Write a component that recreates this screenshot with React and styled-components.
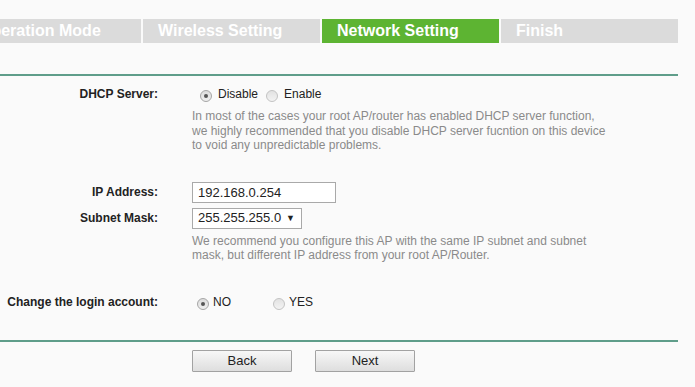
import styled, { createGlobalStyle } from 'styled-components';

const GlobalStyle = createGlobalStyle`
  html, body {
    margin: 0;
    padding: 0;
    background: #fafafa;
    overflow: hidden;
  }
  body {
    font-family: "Liberation Sans", Arial, sans-serif;
  }
`;

const Wrapper = styled.div`
  width: 714px;
  margin-left: -36px;
  padding-top: 19px;
  font-family: "Liberation Sans", Arial, sans-serif;
`;

const Tabs = styled.div`
  display: flex;
  gap: 2px;
`;

const Tab = styled.div`
  width: 177px;
  height: 24px;
  box-sizing: border-box;
  padding-left: 15px;
  background: ${(p) => (p.$active ? '#5db432' : '#dbdbdb')};
  color: #ffffff;
  font-weight: bold;
  font-size: 16px;
  line-height: 24px;
  white-space: nowrap;
  overflow: hidden;
`;

const Divider = styled.div`
  height: 2px;
  background: #5f9d8a;
  margin-top: ${(p) => p.$top}px;
`;

const Row = styled.div`
  display: grid;
  grid-template-columns: 194px 1fr;
  column-gap: 34px;
  align-items: center;
  margin-top: ${(p) => p.$top}px;
`;

const Label = styled.div`
  text-align: right;
  font-weight: bold;
  font-size: 12px;
  line-height: 20px;
  color: #222;
  white-space: nowrap;
`;

const Value = styled.div`
  display: flex;
  align-items: center;
  gap: ${(p) => p.$gap || 0}px;
  font-size: 12px;
  line-height: 20px;
  color: #222;
`;

const Hint = styled.p`
  margin: 0;
  font-size: 12px;
  line-height: 14.5px;
  color: #8a8a8a;
  white-space: nowrap;
`;

const Option = styled.label`
  display: flex;
  align-items: center;
  gap: ${(p) => p.$gap}px;
  width: ${(p) => (p.$width ? `${p.$width}px` : 'auto')};
`;

const Radio = styled.span`
  position: relative;
  width: 10px;
  height: 10px;
  margin-left: ${(p) => p.$ml || 0}px;
  margin-top: 4px;
  border-radius: 50%;
  border: 1px solid ${(p) => (p.$checked ? '#a6a6a6' : '#c3c3c3')};
  background: ${(p) =>
    p.$checked
      ? 'linear-gradient(#dcdcdc, #efefef)'
      : 'linear-gradient(#e2e2e2, #f3f3f3)'};

  &::after {
    content: '';
    display: ${(p) => (p.$checked ? 'block' : 'none')};
    position: absolute;
    left: 3px;
    top: 3px;
    width: 4px;
    height: 4px;
    border-radius: 50%;
    background: #555;
  }
`;

const TextInput = styled.input`
  box-sizing: border-box;
  width: 144px;
  height: 21px;
  padding: 0 5px;
  border: 1px solid #a9a9a9;
  background: #fff;
  font-family: "Liberation Sans", Arial, sans-serif;
  font-size: 13px;
  color: #222;
  outline: none;
`;

const SelectBox = styled.div`
  box-sizing: border-box;
  width: 110px;
  height: 21px;
  padding: 0 5px;
  border: 1px solid #a9a9a9;
  background: #fff;
  display: flex;
  align-items: center;
  justify-content: space-between;
  font-size: 13px;
  color: #222;
`;

const Arrow = styled.span`
  font-size: 9px;
  color: #222;
  margin-right: 1px;
`;

const Buttons = styled.div`
  display: flex;
  gap: 23px;
`;

const Button = styled.button`
  box-sizing: border-box;
  width: 100px;
  height: 22px;
  border: 1px solid #a2a2a2;
  border-radius: 1px;
  background: linear-gradient(#f7f7f7, #dedede);
  font-family: "Liberation Sans", Arial, sans-serif;
  font-size: 13px;
  color: #222;
  padding: 0;
`;

const steps = ['Operation Mode', 'Wireless Setting', 'Network Setting', 'Finish'];

export default function App() {
  return (
    <>
      <GlobalStyle />
      <Wrapper>
        <Tabs>
          {steps.map((s) => (
            <Tab key={s} $active={s === 'Network Setting'}>{s}</Tab>
          ))}
        </Tabs>
        <Divider $top={31} />

        <Row $top={8}>
          <Label>DHCP Server:</Label>
          <Value $gap={8}>
            <Option $gap={6}>
              <Radio $checked $ml={8} />
              Disable
            </Option>
            <Option $gap={6}>
              <Radio />
              Enable
            </Option>
          </Value>
        </Row>
        <Row $top={5}>
          <span />
          <Hint>
            In most of the cases your root AP/router has enabled DHCP server function,<br />
            we highly recommended that you disable DHCP server fucntion on this device<br />
            to void any unpredictable problems.
          </Hint>
        </Row>

        <Row $top={29}>
          <Label>IP Address:</Label>
          <Value>
            <TextInput defaultValue="192.168.0.254" />
          </Value>
        </Row>
        <Row $top={5}>
          <Label>Subnet Mask:</Label>
          <Value>
            <SelectBox>
              <span>255.255.255.0</span>
              <Arrow>▼</Arrow>
            </SelectBox>
          </Value>
        </Row>
        <Row $top={5}>
          <span />
          <Hint>
            We recommend you configure this AP with the same IP subnet and subnet<br />
            mask, but different IP address from your root AP/Router.
          </Hint>
        </Row>

        <Row $top={29}>
          <Label>Change the login account:</Label>
          <Value>
            <Option $gap={4} $width={76}>
              <Radio $checked $ml={5} />
              NO
            </Option>
            <Option $gap={4}>
              <Radio $ml={5} />
              YES
            </Option>
          </Value>
        </Row>

        <Divider $top={28} />

        <Row $top={8}>
          <span />
          <Buttons>
            <Button>Back</Button>
            <Button>Next</Button>
          </Buttons>
        </Row>
      </Wrapper>
    </>
  );
}
